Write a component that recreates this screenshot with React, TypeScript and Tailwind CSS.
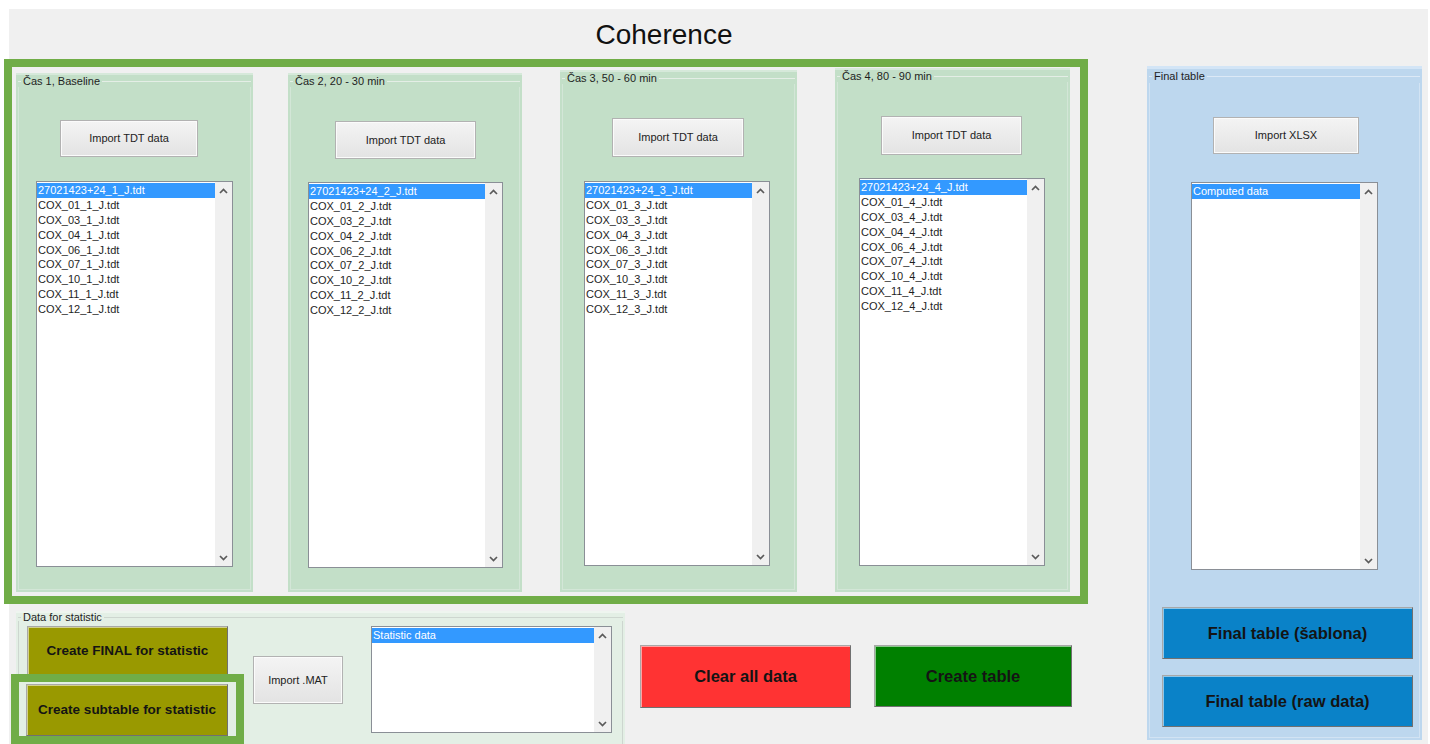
import React from 'react';

type TimePanel = {
  title: string;
  n: number;
  box: string;
  btn: string;
  list: string;
};

// the four measurement windows, each with its own import button and file list
const timePanels: TimePanel[] = [
  {
    title: 'Čas 1, Baseline',
    n: 1,
    box: 'ml-[4px] mt-[6px] w-[237px]',
    btn: 'ml-[41px] mt-[33px] w-[138px] h-[37px]',
    list: 'ml-[17px] mt-[24px] w-[197px] h-[386px]',
  },
  {
    title: 'Čas 2, 20 - 30 min',
    n: 2,
    box: 'ml-[35px] mt-[6px] w-[234px]',
    btn: 'ml-[44px] mt-[34px] w-[141px] h-[38px]',
    list: 'ml-[17px] mt-[23px] w-[195px] h-[386px]',
  },
  {
    title: 'Čas 3, 50 - 60 min',
    n: 3,
    box: 'ml-[38px] mt-[3px] w-[237px]',
    btn: 'ml-[49px] mt-[34px] w-[132px] h-[39px]',
    list: 'ml-[21px] mt-[24px] w-[186px] h-[385px]',
  },
  {
    title: 'Čas 4, 80 - 90 min',
    n: 4,
    box: 'ml-[38px] mt-[1px] w-[235px]',
    btn: 'ml-[43px] mt-[34px] w-[141px] h-[39px]',
    list: 'ml-[21px] mt-[23px] w-[186px] h-[388px]',
  },
];

const subjects = ['01', '03', '04', '06', '07', '10', '11', '12'];

function filesFor(n: number) {
  return [`27021423+24_${n}_J.tdt`, ...subjects.map((s) => `COX_${s}_${n}_J.tdt`)];
}

const grayBtn =
  'flex items-center justify-center border border-[#b2b2b2] bg-linear-to-b from-[#f4f4f4] to-[#e3e3e3] shadow-[inset_0_0_0_1px_#fbfbfb] text-[11px] text-[#222]';

const raisedBtn =
  'flex items-center justify-center border border-[#a8a8a8] border-b-[#707070] border-r-[#707070] shadow-[inset_1px_1px_0_rgba(255,255,255,0.55)] font-bold text-[#141414]';

function Chevron({ up }: { up?: boolean }) {
  return (
    <svg width="9" height="6" viewBox="0 0 9 6">
      <polyline
        points={up ? '1,5 4.5,1.5 8,5' : '1,1 4.5,4.5 8,1'}
        fill="none"
        stroke="#5a5a5a"
        strokeWidth="1.7"
      />
    </svg>
  );
}

function ListBox({ items, className }: { items: string[]; className: string }) {
  return (
    <div className={`flex shrink-0 border border-[#8a8f96] bg-white ${className}`}>
      <div className="flex-1 overflow-hidden pt-[1px]">
        {items.map((t, i) => (
          <div
            key={t}
            className={`h-[14.9px] pl-[1px] text-[11px] leading-[14.9px] whitespace-nowrap ${
              i === 0 ? 'bg-[#3399ff] text-white' : 'text-[#1e1e1e]'
            }`}
          >
            {t}
          </div>
        ))}
      </div>
      <div className="flex w-[17px] flex-col items-center justify-between bg-[#f0f0f0] pt-[6px] pb-[5px]">
        <Chevron up />
        <Chevron />
      </div>
    </div>
  );
}

function Legend({ title, line, h }: { title: string; line: string; h: string }) {
  return (
    <div className={`flex items-center ${h}`}>
      <div className={`h-px w-[3px] ${line}`} />
      <span className="px-[2px] text-[11px] leading-none text-[#1e1e1e] whitespace-nowrap">{title}</span>
      <div className={`h-px flex-1 ${line}`} />
    </div>
  );
}

function TimeBox({ p }: { p: TimePanel }) {
  return (
    <div className={`flex shrink-0 flex-col border-t-2 border-[#d6e9da] bg-[#c3dfc8] px-[2px] pb-[2px] ${p.box}`}>
      <Legend title={p.title} line="bg-[#e4eee6]" h="h-[12px]" />
      <div className="flex flex-1 flex-col items-start border-x border-b border-[#d3e6d7]">
        <button className={`${grayBtn} ${p.btn}`}>Import TDT data</button>
        <ListBox items={filesFor(p.n)} className={p.list} />
      </div>
    </div>
  );
}

export default function App() {
  return (
    <div className="h-[744px] w-[1430px] overflow-hidden bg-white pt-[9px] font-['Liberation_Sans',Arial,sans-serif]">
      <div className="ml-[9px] h-[735px] w-[1419px] bg-[#f0f0f0]">
        <div className="flex h-[50px] w-[1310px] items-center justify-center pt-[2px]">
          <h1 className="text-[28px] leading-none text-[#111]">Coherence</h1>
        </div>

        <div className="flex items-start">
          {/* left side: time windows + statistic tools */}
          <div className="-ml-[5px] flex w-[1084px] shrink-0 flex-col">
            <div className="flex h-[545px] items-stretch border-[8px] border-[#70ad47] pr-[10px] pb-[4px]">
              {timePanels.map((p) => (
                <TimeBox key={p.n} p={p} />
              ))}
            </div>

            <div className="flex items-start">
              <div className="mt-[7px] ml-[12px] flex h-[140px] w-[609px] shrink-0 flex-col border-t-2 border-[#eef5ef] bg-[#e3efe5] px-[2px]">
                <Legend title="Data for statistic" line="bg-[#cdd6cf]" h="h-[8px]" />
                <div className="flex flex-1 items-start border-x border-[#cdd6cf]">
                  <div className="mt-[5px] -ml-[8px] flex w-[233px] shrink-0 flex-col">
                    <button className={`${raisedBtn} ml-[16px] h-[50px] w-[201px] bg-[#999900] text-[13.5px]`}>
                      Create FINAL for statistic
                    </button>
                    <div className="-mt-[2px] border-[8px] border-[#70ad47] pt-[2px] pl-[7px]">
                      <button className={`${raisedBtn} h-[52px] w-[202px] bg-[#999900] text-[13.5px]`}>
                        Create subtable for statistic
                      </button>
                    </div>
                  </div>
                  <button className={`${grayBtn} mt-[35px] ml-[9px] h-[48px] w-[90px] shrink-0`}>Import .MAT</button>
                  <ListBox items={['Statistic data']} className="mt-[5px] ml-[28px] h-[107px] w-[241px]" />
                </div>
              </div>

              <button className={`${raisedBtn} mt-[41px] ml-[15px] h-[63px] w-[211px] shrink-0 bg-[#ff3333] text-[16.5px]`}>
                Clear all data
              </button>
              <button className={`${raisedBtn} mt-[41px] ml-[23px] h-[62px] w-[198px] shrink-0 bg-[#008000] text-[16.5px]`}>
                Create table
              </button>
            </div>
          </div>

          {/* right side: final table */}
          <div className="mt-[7px] ml-[59px] flex h-[674px] w-[275px] shrink-0 flex-col border-t-[3px] border-[#d3e5f6] bg-[#bdd7ee] px-[2px] pb-[2px]">
            <Legend title="Final table" line="bg-[#dce9f6]" h="h-[14px]" />
            <div className="flex flex-1 flex-col items-start border-x border-b border-[#d2e3f3]">
              <button className={`${grayBtn} mt-[34px] ml-[63px] h-[37px] w-[146px]`}>Import XLSX</button>
              <ListBox items={['Computed data']} className="mt-[28px] ml-[41px] h-[388px] w-[187px]" />
              <button className={`${raisedBtn} mt-[37px] ml-[12px] h-[52px] w-[251px] bg-[#0a82c8] text-[16.5px]`}>
                Final table (šablona)
              </button>
              <button className={`${raisedBtn} mt-[16px] ml-[12px] h-[52px] w-[251px] bg-[#0a82c8] text-[16.5px]`}>
                Final table (raw data)
              </button>
            </div>
          </div>
        </div>
      </div>
    </div>
  );
}
